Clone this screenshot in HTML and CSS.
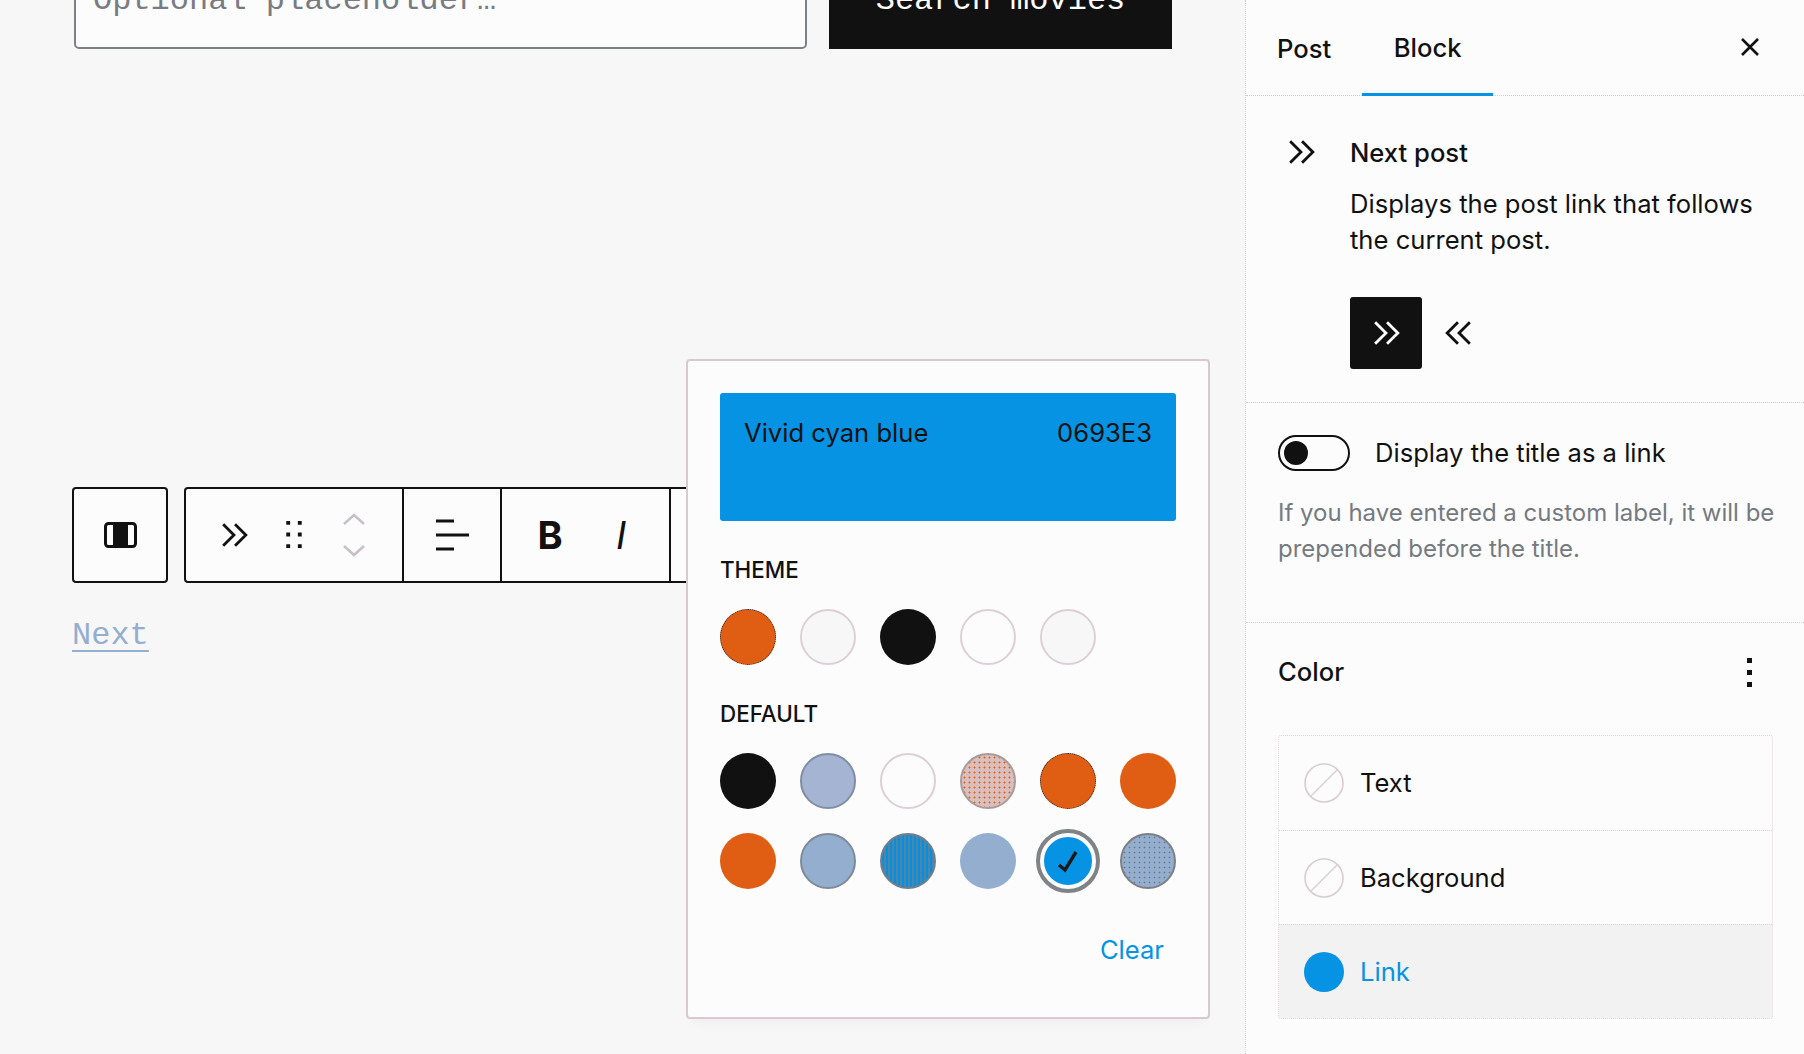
FILE: index.html
```html
<!DOCTYPE html>
<html lang="en">
<head>
  <meta charset="UTF-8" />
  <title>Edit post</title>
  <link rel="stylesheet" href="styles.css">
</head>
<body>

<main class="canvas">
  <div class="search-row">
    <div class="search-input">Optional placeholder…</div>
    <div class="search-btn">Search movies</div>
  </div>

  <div class="toolbar">
    <div class="tool-box">
      <svg class="icon-layout" viewBox="0 0 33 26"><rect x="1.5" y="1.5" width="30" height="23" rx="3" fill="#fcfcfd" stroke="#111" stroke-width="3"/><rect x="9" y="2" width="15" height="22" fill="#111"/></svg>
    </div>
    <div class="tool-box tool-main">
      <div class="tool-group tool-group-first">
        <span class="tool"><svg class="icon-next" viewBox="0 0 25 24"><path d="M2 2l10 10L2 22M13 2l10 10-10 10" fill="none" stroke="#111" stroke-width="2.6"/></svg></span>
        <span class="tool"><svg class="icon-drag" viewBox="0 0 16 29"><path d="M0 0h4v4H0zM12 0h4v4h-4zM0 12h4v4H0zM12 12h4v4h-4zM0 24h4v4H0zM12 24h4v4h-4z" fill="#111"/></svg></span>
        <span class="tool tool-arrows">
          <svg class="icon-arrow" viewBox="0 0 24 12"><path d="M2 11l10-9 10 9" fill="none" stroke="#c9bfcb" stroke-width="2.6"/></svg>
          <svg class="icon-arrow" viewBox="0 0 24 12"><path d="M2 1l10 9 10-9" fill="none" stroke="#c9bfcb" stroke-width="2.6"/></svg>
        </span>
      </div>
      <div class="tool-group tool-group-align">
        <svg class="icon-align" viewBox="0 0 33 32"><path d="M0 2h18M0 16h33M0 30h18" fill="none" stroke="#111" stroke-width="3"/></svg>
      </div>
      <div class="tool-group tool-group-format">
        <span class="tool-format tool-bold">B</span>
        <span class="tool-format tool-italic">I</span>
      </div>
      <div class="tool-group tool-group-more"></div>
    </div>
  </div>

  <a class="next-link" href="#">Next</a>

  <div class="color-popover">
    <div class="color-preview">
      <span>Vivid cyan blue</span>
      <span>0693E3</span>
    </div>

    <h3 class="palette-title palette-theme">THEME</h3>
    <div class="swatches">
      <span class="swatch sw-orange sw-dark-edge"></span>
      <span class="swatch sw-light"></span>
      <span class="swatch sw-black"></span>
      <span class="swatch sw-white"></span>
      <span class="swatch sw-light"></span>
    </div>

    <h3 class="palette-title palette-default">DEFAULT</h3>
    <div class="swatches swatches-default">
      <span class="swatch sw-black"></span>
      <span class="swatch sw-lavender"></span>
      <span class="swatch sw-white"></span>
      <span class="swatch sw-blush"></span>
      <span class="swatch sw-orange sw-dark-edge"></span>
      <span class="swatch sw-orange"></span>
      <span class="swatch sw-orange"></span>
      <span class="swatch sw-sky"></span>
      <span class="swatch sw-hatch"></span>
      <span class="swatch sw-sky-flat"></span>
      <span class="swatch sw-selected">
        <svg class="icon-check" viewBox="0 0 24 24"><path d="M3 16l6 5L20 3" fill="none" stroke="#1a1a1a" stroke-width="3.4"/></svg>
      </span>
      <span class="swatch sw-steel"></span>
    </div>

    <div class="popover-foot"><a class="clear-link" href="#">Clear</a></div>
  </div>
</main>

<aside class="sidebar">
  <header class="side-tabs">
    <span class="tab">Post</span>
    <span class="tab tab-active">Block</span>
    <svg class="icon-close" viewBox="0 0 20 20"><path d="M2 2l16 16M18 2L2 18" fill="none" stroke="#111" stroke-width="2.6"/></svg>
  </header>

  <section class="panel panel-card">
    <svg class="icon-next card-icon" viewBox="0 0 25 24"><path d="M2 2l10 10L2 22M13 2l10 10-10 10" fill="none" stroke="#111" stroke-width="2.6"/></svg>
    <div class="card-body">
      <h2 class="card-title">Next post</h2>
      <p class="card-desc">Displays the post link that follows the current post.</p>
      <div class="variations">
        <span class="variation variation-on"><svg class="icon-next" viewBox="0 0 25 24"><path d="M2 2l10 10L2 22M13 2l10 10-10 10" fill="none" stroke="#fff" stroke-width="2.6"/></svg></span>
        <span class="variation"><svg class="icon-next" viewBox="0 0 25 24"><path d="M23 2L13 12l10 10M12 2L2 12l10 10" fill="none" stroke="#111" stroke-width="2.6"/></svg></span>
      </div>
    </div>
  </section>

  <section class="panel panel-toggle">
    <div class="toggle-row">
      <span class="toggle"><span class="toggle-thumb"></span></span>
      <span class="toggle-label">Display the title as a link</span>
    </div>
    <p class="help">If you have entered a custom label, it will be prepended before the title.</p>
  </section>

  <section class="panel-color">
    <div class="color-head">
      <h2 class="color-title">Color</h2>
      <svg class="icon-dots" viewBox="0 0 5 29"><path d="M0 0h5v5H0zM0 12h5v5H0zM0 24h5v5H0z" fill="#111"/></svg>
    </div>
    <div class="color-list">
      <div class="color-item">
        <svg class="indicator" viewBox="0 0 40 40"><circle cx="20" cy="20" r="19" fill="none" stroke="#d9ccd2" stroke-width="1.6"/><path d="M6.5 33.5l27-27" stroke="#d9ccd2" stroke-width="1.2"/></svg>
        <span>Text</span>
      </div>
      <div class="color-item">
        <svg class="indicator" viewBox="0 0 40 40"><circle cx="20" cy="20" r="19" fill="none" stroke="#d9ccd2" stroke-width="1.6"/><path d="M6.5 33.5l27-27" stroke="#d9ccd2" stroke-width="1.2"/></svg>
        <span>Background</span>
      </div>
      <div class="color-item color-item-active">
        <span class="indicator indicator-blue"></span>
        <span>Link</span>
      </div>
    </div>
  </section>
</aside>

</body>
</html>
```
FILE: styles.css
```css
* {
  box-sizing: border-box;
}
html, body {
  height: 100%;
}
body {
  margin: 0;
  display: flex;
  overflow: hidden;
  background: #f7f7f8;
  color: #111;
  font-family: Inter, "Liberation Sans", sans-serif;
  font-size: 25.6px;
  line-height: 36px;
}
h2, h3, p {
  margin: 0;
  font-size: inherit;
}

/* canvas */
.canvas {
  position: relative;
  width: 1245px;
  flex: none;
  overflow: hidden;
}
.search-row {
  display: flex;
  gap: 22px;
  height: 99px;
  margin: -50px 0 0 74px;
  font-family: "Liberation Mono", monospace;
  font-size: 32px;
}
.search-input {
  width: 733px;
  padding: 31px 17px 0;
  border: 2px solid #7d8289;
  border-radius: 5px;
  background: #fcfcfd;
  color: #787c82;
}
.search-btn {
  width: 343px;
  padding-top: 33px;
  background: #111;
  color: #fff;
  text-align: center;
}

/* block toolbar */
.toolbar {
  display: flex;
  gap: 16px;
  width: 720px;
  height: 96px;
  margin: 438px 0 0 72px;
}
.tool-box {
  display: flex;
  align-items: center;
  justify-content: center;
  width: 96px;
  flex: none;
  border: 2px solid #111;
  border-radius: 4px;
  background: #fcfcfd;
}
.tool-main {
  flex: 1;
  align-items: stretch;
  justify-content: flex-start;
}
.tool-group {
  display: flex;
  align-items: center;
  justify-content: center;
  flex: none;
  border-right: 2px solid #111;
}
.tool-group-first {
  width: 218px;
}
.tool-group-align {
  width: 98px;
}
.tool-group-format {
  width: 169px;
  gap: 52px;
  padding-right: 2px;
}
.tool-group-more {
  flex: 1;
  border-right: 0;
}
.tool {
  display: flex;
  align-items: center;
  justify-content: center;
  width: 60px;
}
.tool-arrows {
  flex-direction: column;
  gap: 20px;
}
.tool-format {
  width: 21px;
  font-size: 38px;
  text-align: center;
}
.tool-bold {
  font-weight: 700;
}
.tool-italic {
  font-style: italic;
  font-weight: 400;
}
.icon-layout {
  width: 33px;
  height: 26px;
}
.icon-next {
  width: 27px;
  height: 26px;
}
.icon-drag {
  width: 16px;
  height: 28px;
}
.icon-arrow {
  width: 24px;
  height: 12px;
}
.icon-align {
  width: 33px;
  height: 32px;
}
.next-link {
  display: inline-block;
  margin: 35px 0 0 72px;
  color: #94aecf;
  font-family: "Liberation Mono", monospace;
  font-size: 32px;
  line-height: 36px;
  text-decoration: underline;
  text-decoration-thickness: 2px;
  text-underline-offset: 6px;
}

/* color popover */
.color-popover {
  position: absolute;
  left: 686px;
  top: 359px;
  width: 524px;
  height: 660px;
  padding: 32px 32px 0;
  border: 2px solid #d8c9d0;
  border-radius: 4px;
  background: #fcfcfd;
  box-shadow: 0 12px 10px -6px rgba(0, 0, 0, 0.03);
}
.color-preview {
  display: flex;
  justify-content: space-between;
  height: 128px;
  padding: 22px 24px;
  border-radius: 3px;
  background: #0693e3;
}
.palette-title {
  font-size: 22.4px;
  font-weight: 500;
  line-height: 32px;
}
.palette-theme {
  margin-top: 33px;
}
.palette-default {
  margin-top: 33px;
}
.swatches {
  display: grid;
  grid-template-columns: repeat(6, 56px);
  gap: 24px;
  margin-top: 23px;
}
.swatches-default {
  margin-top: 23px;
}
.swatch {
  display: flex;
  align-items: center;
  justify-content: center;
  width: 56px;
  height: 56px;
  border-radius: 50%;
}
.sw-orange {
  background: #e05e14;
}
.sw-dark-edge {
  border: 1px dotted #222;
}
.sw-light {
  border: 2px solid #dccfd5;
  background: #f7f7f8;
}
.sw-black {
  background: #111;
}
.sw-white {
  border: 2px solid #dccfd5;
  background: #fcfcfd;
}
.sw-lavender {
  border: 2px solid #7f8ea4;
  background: #a4b4d2;
}
.sw-blush {
  border: 2px solid #a99b9c;
  background: radial-gradient(circle, #e0601a 0.8px, transparent 1.2px) 0 0 / 5px 5px, #d9c0bf;
}
.sw-sky {
  border: 2px solid #7d8a99;
  background: #94aecf;
}
.sw-sky-flat {
  background: #94aecf;
}
.sw-hatch {
  border: 2px solid #6f7f8d;
  background: repeating-linear-gradient(90deg, #0b8ed8 0 2px, #4a86ad 2px 4px);
}
.sw-steel {
  border: 2px solid #7c7f86;
  background: radial-gradient(circle, #6d7480 0.7px, transparent 1.1px) 0 0 / 5px 5px, #94aecf;
}
.sw-selected {
  background: #0693e3;
  outline: 4px solid #7f8287;
  border: 4px solid #fcfcfd;
}
.icon-check {
  width: 24px;
  height: 24px;
}
.popover-foot {
  display: flex;
  justify-content: flex-end;
  margin-top: 43px;
  padding-right: 12px;
}
.clear-link {
  color: #0693e3;
  text-decoration: none;
}

/* sidebar */
.sidebar {
  flex: 1;
  border-left: 1px dotted #ddced5;
  background: #fcfcfd;
}
.side-tabs {
  display: flex;
  align-items: stretch;
  height: 96px;
  padding-left: 31px;
  border-bottom: 1px dotted #d9c9d1;
}
.tab {
  display: flex;
  align-items: center;
  padding-top: 2px;
  font-weight: 500;
}
.tab-active {
  justify-content: center;
  width: 131px;
  margin-left: 31px;
  border-bottom: 3px solid #0693e3;
  margin-bottom: -1px;
}
.icon-close {
  align-self: center;
  width: 20px;
  height: 20px;
  margin: 0 44px 2px auto;
}
.panel {
  border-bottom: 1px dotted #d9c9d1;
}
.panel-card {
  display: flex;
  height: 307px;
  padding: 39px 0 0 42px;
}
.card-icon {
  margin-top: 4px;
  flex: none;
}
.card-body {
  width: 420px;
  margin-left: 35px;
}
.card-title {
  font-weight: 500;
}
.card-desc {
  margin-top: 15px;
}
.variations {
  display: flex;
  margin-top: 39px;
}
.variation {
  display: flex;
  align-items: center;
  justify-content: center;
  width: 72px;
  height: 72px;
  border-radius: 3px;
}
.variation-on {
  background: #111;
}
.panel-toggle {
  height: 220px;
  padding: 31px 20px 0 32px;
}
.toggle-row {
  display: flex;
  align-items: center;
  gap: 25px;
}
.toggle-label {
  padding-top: 1px;
}
.toggle {
  display: flex;
  align-items: center;
  width: 72px;
  height: 36px;
  padding-left: 4px;
  border: 2px solid #111;
  border-radius: 18px;
}
.toggle-thumb {
  width: 24px;
  height: 24px;
  border-radius: 50%;
  background: #111;
}
.help {
  margin-top: 24px;
  color: #757a80;
  font-size: 24px;
}
.panel-color {
  padding: 31px 31px 0 32px;
}
.color-head {
  display: flex;
  align-items: center;
  justify-content: space-between;
  padding-right: 21px;
}
.color-title {
  font-weight: 500;
}
.icon-dots {
  width: 5px;
  height: 29px;
}
.color-list {
  margin-top: 45px;
  border: 1px dotted #ddd3d8;
  border-radius: 3px;
}
.color-item {
  display: flex;
  align-items: center;
  gap: 16px;
  height: 94px;
  padding-left: 25px;
  border-top: 1px dotted #ddd3d8;
}
.color-item:first-child {
  border-top: 0;
}
.color-item-active {
  background: #f2f2f3;
  color: #0693e3;
}
.indicator {
  width: 40px;
  height: 40px;
  flex: none;
}
.indicator-blue {
  border-radius: 50%;
  background: #0693e3;
}
```
